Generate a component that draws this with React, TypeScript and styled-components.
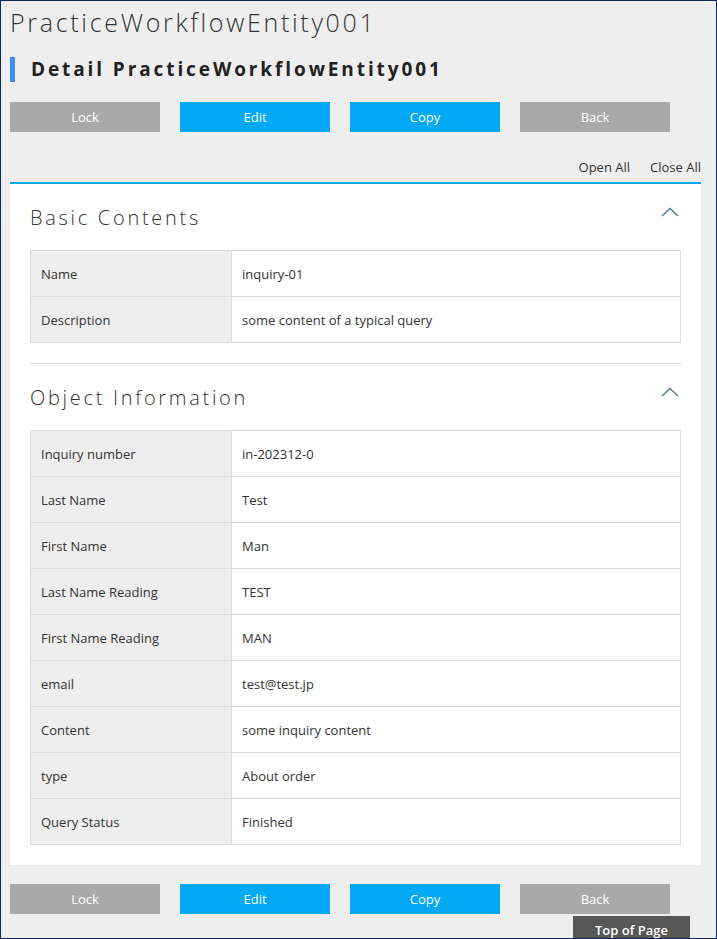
import React from "react";
import styled, { createGlobalStyle } from "styled-components";

const Global = createGlobalStyle`
  html, body { margin: 0; padding: 0; background: #eeeeee; }
  body { font-family: "Open Sans", "Noto Sans", sans-serif; color: #333; }
  * { box-sizing: border-box; }
`;

const Frame = styled.div`
  position: relative;
  width: 717px;
  height: 939px;
  border: 1px solid #0d2a63;
  background: #eeeeee;
  overflow: hidden;
  padding: 0 16px 0 9px;
`;

const PageTitle = styled.h1`
  margin: 0;
  padding-top: 4px;
  height: 44px;
  font-weight: 300;
  font-size: 25px;
  letter-spacing: 2.7px;
  color: #333;
  line-height: 34px;
`;

const SubTitle = styled.h2`
  margin: 12px 0 0 0;
  height: 25px;
  border-left: 5px solid #3d8ef8;
  padding-left: 16px;
  font-size: 19px;
  font-weight: 700;
  letter-spacing: 2.9px;
  line-height: 25px;
  color: #222;
`;

const ButtonRow = styled.div<{ $top: number }>`
  display: flex;
  gap: 20px;
  margin-top: ${(p) => p.$top}px;
`;

const Btn = styled.button<{ $primary?: boolean }>`
  width: 150px;
  height: 30px;
  border: none;
  background: ${(p) => (p.$primary ? "#03a9f4" : "#a9a9a9")};
  color: #fff;
  font-family: "Open Sans", "Noto Sans", sans-serif;
  font-size: 13px;
  padding: 0;
`;

const Toggles = styled.div`
  display: flex;
  justify-content: flex-end;
  gap: 20px;
  margin-top: 26px;
  height: 24px;
  font-size: 13px;
  line-height: 18px;
  color: #333;
  width: 691px;
`;

const Panel = styled.div`
  width: 691px;
  border-top: 2px solid #03a9f4;
  background: #fff;
  padding: 0 20px 20px 20px;
`;

const Section = styled.section<{ $first?: boolean }>`
  border-top: ${(p) => (p.$first ? "none" : "1px solid #ddd")};
  margin-top: ${(p) => (p.$first ? 0 : 20)}px;
`;

const SectionHead = styled.div`
  display: flex;
  justify-content: space-between;
  align-items: flex-start;
  height: 66px;
  padding-top: 21px;
`;

const SectionTitle = styled.h3`
  margin: 0;
  font-weight: 300;
  font-size: 20px;
  letter-spacing: 2.7px;
  line-height: 26px;
  color: #333;
`;

const Chevron = styled.svg`
  margin-top: 2px;
  margin-right: 2px;
`;

const Table = styled.div`
  border: 1px solid #dcdcdc;
  border-bottom: none;
`;

const Row = styled.div`
  display: grid;
  grid-template-columns: 201px 1fr;
  height: 46px;
  border-bottom: 1px solid #dcdcdc;
`;

const Label = styled.div`
  background: #eeeeee;
  border-right: 1px solid #dcdcdc;
  display: flex;
  align-items: center;
  padding-left: 10px;
  font-size: 13px;
  color: #333;
`;

const Value = styled.div`
  display: flex;
  align-items: center;
  padding-left: 10px;
  font-size: 13px;
  color: #333;
`;

const TopOfPage = styled.div`
  position: absolute;
  left: 572px;
  top: 915px;
  width: 117px;
  height: 30px;
  background: #575757;
  color: #fff;
  font-size: 13px;
  font-weight: 600;
  text-align: center;
  padding-top: 5px;
`;

const ChevronUp = () => (
  <Chevron width="18" height="10" viewBox="0 0 18 10">
    <polyline points="1,9 9,1.5 17,9" fill="none" stroke="#4a7896" strokeWidth="1.3" />
  </Chevron>
);

const basic = [
  ["Name", "inquiry-01"],
  ["Description", "some content of a typical query"],
];

const info = [
  ["Inquiry number", "in-202312-0"],
  ["Last Name", "Test"],
  ["First Name", "Man"],
  ["Last Name Reading", "TEST"],
  ["First Name Reading", "MAN"],
  ["email", "test@test.jp"],
  ["Content", "some inquiry content"],
  ["type", "About order"],
  ["Query Status", "Finished"],
];

const Buttons = ({ top }: { top: number }) => (
  <ButtonRow $top={top}>
    <Btn>Lock</Btn>
    <Btn $primary>Edit</Btn>
    <Btn $primary>Copy</Btn>
    <Btn>Back</Btn>
  </ButtonRow>
);

export default function App() {
  return (
    <>
      <Global />
      <Frame>
        <PageTitle>PracticeWorkflowEntity001</PageTitle>
        <SubTitle>Detail PracticeWorkflowEntity001</SubTitle>
        <Buttons top={20} />
        <Toggles>
          <span>Open All</span>
          <span>Close All</span>
        </Toggles>
        <Panel>
          <Section $first>
            <SectionHead>
              <SectionTitle>Basic Contents</SectionTitle>
              <ChevronUp />
            </SectionHead>
            <Table>
              {basic.map(([k, v]) => (
                <Row key={k}>
                  <Label>{k}</Label>
                  <Value>{v}</Value>
                </Row>
              ))}
            </Table>
          </Section>
          <Section>
            <SectionHead>
              <SectionTitle>Object Information</SectionTitle>
              <ChevronUp />
            </SectionHead>
            <Table>
              {info.map(([k, v]) => (
                <Row key={k}>
                  <Label>{k}</Label>
                  <Value>{v}</Value>
                </Row>
              ))}
            </Table>
          </Section>
        </Panel>
        <Buttons top={19} />
        <TopOfPage>Top of Page</TopOfPage>
      </Frame>
    </>
  );
}
